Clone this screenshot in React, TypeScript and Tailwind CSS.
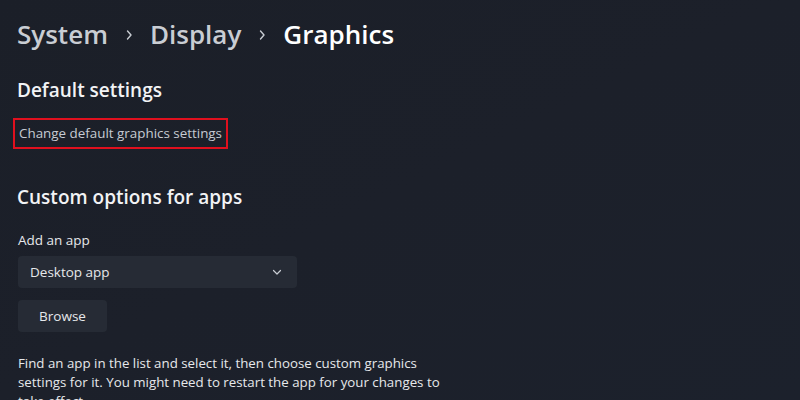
import React from "react";

function Chevron({ className }: { className?: string }) {
  return (
    <svg width="10" height="12" viewBox="0 0 10 12" className={className} fill="none">
      <path d="M3.5 2 L7 6 L3.5 10" stroke="currentColor" strokeWidth="1.4" strokeLinecap="round" strokeLinejoin="round" />
    </svg>
  );
}

function Down({ className }: { className?: string }) {
  return (
    <svg width="10" height="10" viewBox="0 0 10 10" className={className} fill="none">
      <path d="M1.5 3.5 L5 7 L8.5 3.5" stroke="currentColor" strokeWidth="1.2" strokeLinecap="round" strokeLinejoin="round" />
    </svg>
  );
}

export default function App() {
  return (
    <div
      className="w-[800px] h-[400px] overflow-hidden bg-gradient-to-br from-[#1b1f28] via-[#1c202a] to-[#1c212c] text-white"
      style={{ fontFamily: '"Open Sans", "Noto Sans", sans-serif' }}
    >
      <div className="pl-[17px] pt-[14px] flex flex-col items-start">
        <div className="flex items-center h-[40px] text-[26px] font-semibold leading-[40px]">
          <span className="text-[#c9cdd3]">System</span>
          <Chevron className="text-[#c9cdd3] mx-[16px] mt-[2px]" />
          <span className="text-[#c9cdd3]">Display</span>
          <Chevron className="text-[#c9cdd3] mx-[16px] mt-[2px]" />
          <span className="text-white">Graphics</span>
        </div>
        <div className="mt-[22px] h-[28px] leading-[28px] text-[19px] font-semibold text-[#f2f3f5]">Default settings</div>
        <div className="mt-[14px] ml-[-4px] border-2 border-[#e0101e] h-[31px] w-[215px] flex items-center pl-[4px]">
          <span className="text-[13.4px] text-[#c6cbd3] whitespace-nowrap">Change default graphics settings</span>
        </div>
        <div className="mt-[34px] h-[28px] leading-[28px] text-[19px] font-semibold text-[#f2f3f5]">Custom options for apps</div>
        <div className="mt-[19px] h-[20px] leading-[20px] text-[13.5px] text-[#e6e8eb] pl-[1px]">Add an app</div>
        <div className="mt-[6px] ml-[1px] w-[279px] h-[32px] rounded-[4px] bg-[#262b35] flex items-center justify-between pl-[12px] pr-[15px]">
          <span className="text-[13.5px] text-[#e6e8eb]">Desktop app</span>
          <Down className="text-[#c9cdd3]" />
        </div>
        <div className="mt-[12px] ml-[1px] w-[89px] h-[32px] rounded-[4px] bg-[#262b35] flex items-center justify-center">
          <span className="text-[13.5px] text-[#e6e8eb]">Browse</span>
        </div>
        <p className="mt-[22px] ml-[1px] w-[430px] text-[13.3px] leading-[19px] text-[#e6e8eb]">
          Find an app in the list and select it, then choose custom graphics settings for it. You might need to restart the app for your changes to take effect.
        </p>
      </div>
    </div>
  );
}
